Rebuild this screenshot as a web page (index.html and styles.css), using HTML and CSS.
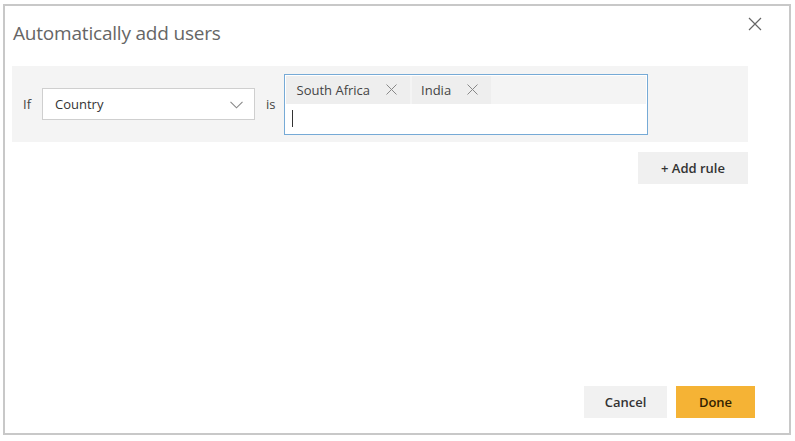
FILE: index.html
```html
<!DOCTYPE html>
<html>
<head>
<meta charset="utf-8">
<link rel="stylesheet" href="styles.css">
</head>
<body>
<div class="dialog">
  <div class="header">
    <h1 class="title">Automatically add users</h1>
    <button class="close" aria-label="Close">
      <svg width="14" height="14" viewBox="0 0 14 14"><path d="M1 1L13 13M13 1L1 13" stroke="#666" stroke-width="1.2" fill="none"/></svg>
    </button>
  </div>
  <div class="rule">
    <span class="lbl-if">If</span>
    <div class="select">
      <span>Country</span>
      <svg class="chev" width="13" height="8" viewBox="0 0 13 8"><path d="M0.5 0.8L6.5 6.8L12.5 0.8" stroke="#888" stroke-width="1.1" fill="none"/></svg>
    </div>
    <span class="lbl-is">is</span>
    <div class="tagbox">
      <div class="tags">
        <span class="tag">South Africa<svg class="x" width="11" height="11" viewBox="0 0 11 11"><path d="M0.5 0.5L10.5 10.5M10.5 0.5L0.5 10.5" stroke="#888" stroke-width="1" fill="none"/></svg></span>
        <span class="tag">India<svg class="x" width="11" height="11" viewBox="0 0 11 11"><path d="M0.5 0.5L10.5 10.5M10.5 0.5L0.5 10.5" stroke="#888" stroke-width="1" fill="none"/></svg></span>
      </div>
      <div class="inputline"><span class="caret"></span></div>
    </div>
  </div>
  <div class="addrow">
    <button class="btn add">+ Add rule</button>
  </div>
  <div class="spacer"></div>
  <div class="footer">
    <button class="btn cancel">Cancel</button>
    <button class="btn done">Done</button>
  </div>
</div>
</body>
</html>
```

FILE: styles.css
```css
html, body {
  margin: 0;
  padding: 0;
  background: #ffffff;
}
body {
  font-family: "Open Sans", "Noto Sans", sans-serif;
  color: #333;
}
.dialog {
  box-sizing: border-box;
  margin: 4px 0 0 3px;
  width: 788px;
  height: 431px;
  border: 2px solid #c8c8c8;
  background: #fff;
  display: flex;
  flex-direction: column;
  padding: 0 0 0 7px;
}
.header {
  display: flex;
  justify-content: space-between;
  align-items: flex-start;
  height: 60px;
}
.title {
  margin: 14px 0 0 1px;
  font-size: 19px;
  font-weight: 400;
  color: #666;
  letter-spacing: -0.2px;
}
.close {
  margin: 11px 27px 0 0;
  padding: 0;
  border: 0;
  background: none;
  width: 14px;
  height: 14px;
  display: flex;
}
.rule {
  width: 736px;
  height: 76px;
  background: #f4f4f4;
  display: flex;
  align-items: center;
  box-sizing: border-box;
  padding-left: 11px;
}
.lbl-if {
  font-size: 13px;
  color: #444;
  margin-right: 11px;
}
.select {
  box-sizing: border-box;
  width: 213px;
  height: 32px;
  border: 1px solid #cfcfcf;
  background: #fff;
  display: flex;
  align-items: center;
  justify-content: space-between;
  padding: 0 11px 0 12px;
  font-size: 13px;
  color: #333;
}
.chev { margin-top: 1px; }
.lbl-is {
  font-size: 13px;
  color: #444;
  margin: 0 8px 0 11px;
}
.tagbox {
  box-sizing: border-box;
  width: 364px;
  height: 61px;
  border: 1px solid #76aad6;
  background: #fff;
  display: flex;
  flex-direction: column;
  padding: 1px;
}
.tags {
  display: flex;
  height: 28px;
  background: #f4f4f4;
}
.tag {
  display: flex;
  align-items: center;
  height: 28px;
  padding: 0 13px 0 11px;
  background: #eeeeee;
  font-size: 13px;
  color: #444;
  gap: 16px;
}
.tag + .tag { margin-left: 2px; padding-left: 9px; }
.inputline {
  flex: 1;
  display: flex;
  align-items: center;
  padding-left: 6px;
}
.caret {
  width: 1px;
  height: 17px;
  background: #333;
  margin-top: 1px;
}
.addrow {
  width: 736px;
  display: flex;
  justify-content: flex-end;
  margin-top: 10px;
}
.btn {
  font-family: "Open Sans", "Noto Sans", sans-serif;
  border: 0;
  font-size: 13px;
  font-weight: 600;
  color: #333;
  height: 32px;
  padding: 0;
}
.add {
  width: 110px;
  background: #f0f0f0;
}
.spacer { flex: 1; }
.footer {
  display: flex;
  justify-content: flex-end;
  gap: 9px;
  padding-right: 34px;
  margin-bottom: 15px;
}
.cancel {
  width: 83px;
  background: #f1f1f1;
}
.done {
  width: 79px;
  background: #f5b335;
  color: #332200;
}
```
